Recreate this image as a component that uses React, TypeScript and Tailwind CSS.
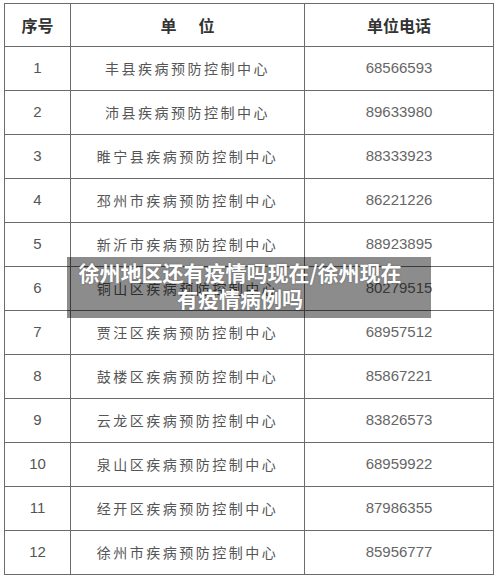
import React from "react";

const rows: [string, string, string][] = [
  ["1", "丰县疾病预防控制中心", "68566593"],
  ["2", "沛县疾病预防控制中心", "89633980"],
  ["3", "睢宁县疾病预防控制中心", "88333923"],
  ["4", "邳州市疾病预防控制中心", "86221226"],
  ["5", "新沂市疾病预防控制中心", "88923895"],
  ["6", "铜山区疾病预防控制中心", "80279515"],
  ["7", "贾汪区疾病预防控制中心", "68957512"],
  ["8", "鼓楼区疾病预防控制中心", "85867221"],
  ["9", "云龙区疾病预防控制中心", "83826573"],
  ["10", "泉山区疾病预防控制中心", "68959922"],
  ["11", "经开区疾病预防控制中心", "87986355"],
  ["12", "徐州市疾病预防控制中心", "85956777"],
];

const cjk = { fontFamily: '"Noto Sans CJK SC", "Noto Sans", sans-serif' };
const num = { fontFamily: '"Liberation Sans", Arial, sans-serif' };

export default function App() {
  return (
    <div className="relative w-[500px] h-[578px] bg-white overflow-hidden">
      <table className="ml-[4px] mt-[3px] w-[489px] border-collapse border border-[#6b6b6b] table-fixed">
        <colgroup>
          <col className="w-[66px]" />
          <col className="w-[234px]" />
          <col className="w-[189px]" />
        </colgroup>
        <thead>
          <tr className="h-[43px]">
            <th className="border border-[#6b6b6b] text-[16px] font-bold text-[#333] text-center p-0" style={cjk}>
              序号
            </th>
            <th className="border border-[#6b6b6b] text-[16px] font-bold text-[#333] text-center p-0" style={cjk}>
              单<span className="inline-block w-[22px]" />位
            </th>
            <th className="border border-[#6b6b6b] text-[16px] font-bold text-[#333] text-center p-0" style={cjk}>
              单位电话
            </th>
          </tr>
        </thead>
        <tbody>
          {rows.map(([n, name, tel]) => (
            <tr key={n} className="h-[44px]">
              <td className="border border-[#6b6b6b] text-center text-[15px] text-[#555] p-0" style={num}>
                {n}
              </td>
              <td className="border border-[#6b6b6b] text-center text-[14px] text-[#555] tracking-[2.5px] p-0" style={cjk}>
                {name}
              </td>
              <td className="border border-[#6b6b6b] text-center text-[15px] text-[#666] p-0" style={num}>
                {tel}
              </td>
            </tr>
          ))}
        </tbody>
      </table>
      <div
        className="absolute left-[67px] top-[257px] w-[364px] h-[61px] bg-black/45 flex flex-col items-center pt-[2px] pr-[18px] text-white font-bold text-[21px] leading-[26px]"
        style={{ ...cjk, textShadow: "0 0 2px rgba(0,0,0,0.3)" }}
      >
        <div>徐州地区还有疫情吗现在/徐州现在</div>
        <div>有疫情病例吗</div>
      </div>
    </div>
  );
}
